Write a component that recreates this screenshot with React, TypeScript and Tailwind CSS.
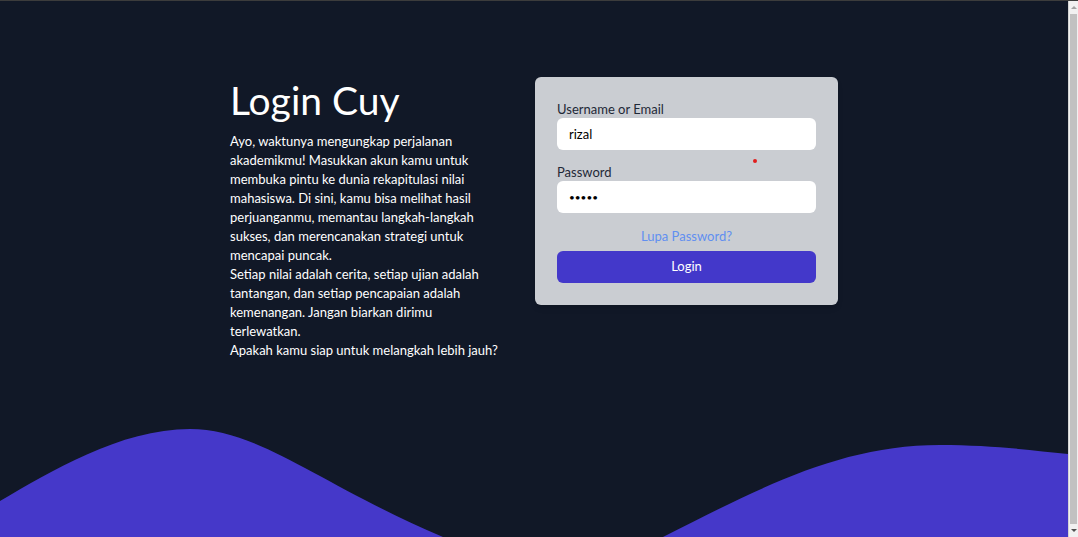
import React from 'react';

const font = { fontFamily: 'Lato, "Open Sans", sans-serif' };

function Wave() {
  return (
    <svg
      className="absolute bottom-0 left-0 h-[137px] w-full"
      viewBox="0 0 1068 137"
      preserveAspectRatio="none"
    >
      <path
        fill="#4538c9"
        d="M0 101 C50 72 120 29 190 29 C260 29 320 85 443 137 C500 168 600 168 663 137 C760 88 840 45 940 45 C990 45 1030 50 1068 54 V 200 H 0 Z"
      />
    </svg>
  );
}

function Scrollbar() {
  return (
    <div className="flex w-[10px] flex-col items-center border-l border-[#d4d4d4] bg-[#f1f1f1]">
      <div className="mt-[5px] h-0 w-0 border-x-[3px] border-b-[3px] border-x-transparent border-b-[#a3a3a3]" />
      <div className="mt-[5px] w-[7px] flex-1 bg-[#c1c1c1]" />
      <div className="mt-[5px] mb-[5px] h-0 w-0 border-x-[3px] border-t-[3px] border-x-transparent border-t-[#505050]" />
    </div>
  );
}

export default function App() {
  return (
    <div className="flex h-[537px] w-full overflow-hidden border-t border-[#3c3c3c]" style={font}>
      <main className="relative flex-1 overflow-hidden bg-[#111827]">
        <div className="relative z-10 flex items-start justify-center gap-[30px] pt-[76px]">
          <section className="w-[275px] text-white">
            <h1 className="text-[39px] leading-[46px] font-normal">Login Cuy</h1>
            <p className="mt-[9px] text-[13px] leading-[19px]">
              Ayo, waktunya mengungkap perjalanan akademikmu! Masukkan akun kamu untuk membuka pintu ke dunia
              rekapitulasi nilai mahasiswa. Di sini, kamu bisa melihat hasil perjuanganmu, memantau langkah-langkah
              sukses, dan merencanakan strategi untuk mencapai puncak.
              <br />
              Setiap nilai adalah cerita, setiap ujian adalah tantangan, dan setiap pencapaian adalah kemenangan.
              Jangan biarkan dirimu terlewatkan.
              <br />
              Apakah kamu siap untuk melangkah lebih jauh?
            </p>
          </section>

          <form className="relative w-[303px] rounded-md bg-[#cacdd2] px-[22px] pt-[24px] pb-[22px] shadow-md">
            <label className="block text-[13px] leading-[17px] text-[#1f2937]">Username or Email</label>
            <input
              type="text"
              defaultValue="rizal"
              className="block h-[32px] w-full rounded-md bg-white px-3 text-[13px] text-black outline-none"
            />
            <label className="mt-[14px] block text-[13px] leading-[17px] text-[#1f2937]">Password</label>
            <input
              type="password"
              defaultValue="rizal"
              className="block h-[32px] w-full rounded-md bg-white px-3 text-[10px] text-black outline-none"
            />
            <div className="mt-[14px] text-center text-[13px] leading-[18px] text-[#618ff0]">Lupa Password?</div>
            <button
              type="button"
              className="mt-[6px] block h-[32px] w-full rounded-md bg-[#4338ca] text-[13px] text-white"
            >
              Login
            </button>
            <span className="absolute top-[82px] left-[218px] h-[4px] w-[4px] rounded-full bg-[#e11d1d]" />
          </form>
        </div>
        <Wave />
      </main>
      <Scrollbar />
    </div>
  );
}
